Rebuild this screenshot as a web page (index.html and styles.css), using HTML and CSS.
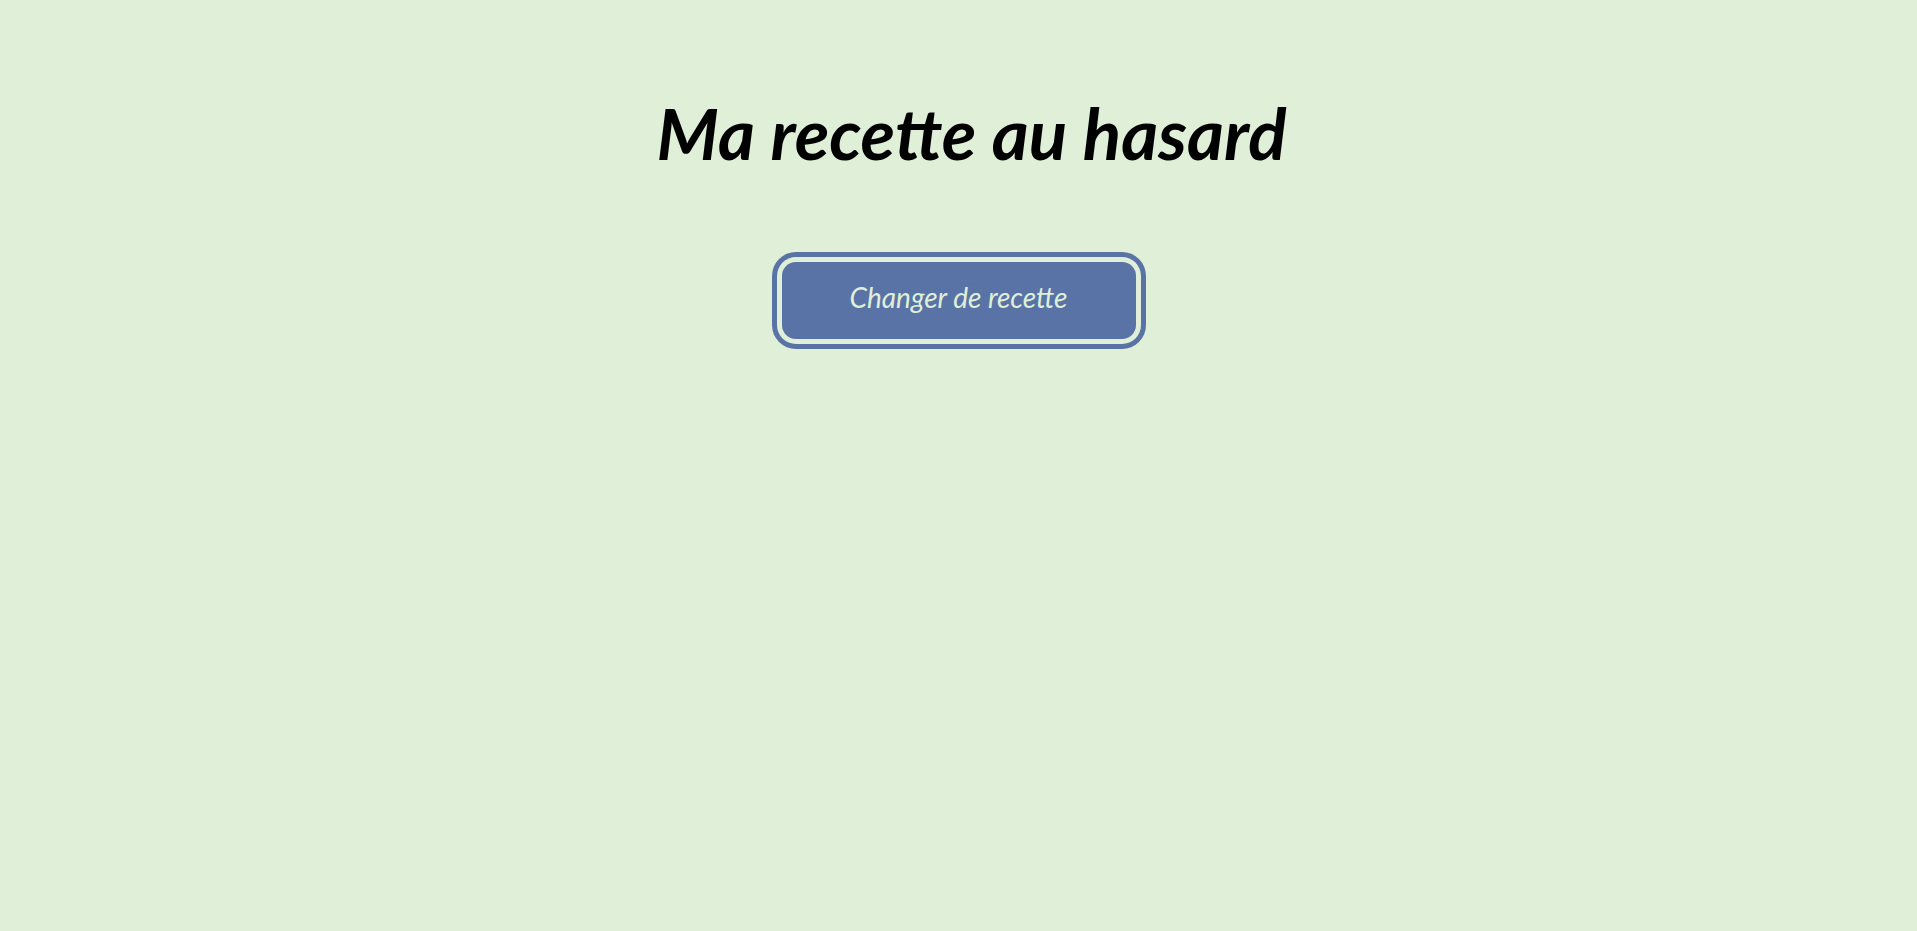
FILE: index.html
```
<!DOCTYPE html>
<html lang="fr">
<head>
    <meta charset="UTF-8">
    <meta name="viewport" content="width=device-width, initial-scale=1.0">
    <title>Ma recette au hasard</title>
    <link rel="stylesheet" href="styles.css">
</head>
<body>
    <header class="header">
        <h1 class="title">Ma recette au hasard</h1>
    </header>

    <main class="container">
        <button class="btn-recette" type="button">Changer de recette</button>
    </main>
</body>
</html>
```

FILE: styles.css
```
body {
    margin: 0;
    padding: 88px 20px;
    background-color: #dfefd8;
    font-family: "Lato", cursive;
    font-style: italic;
    text-align: center;
}

.title {
    margin: 0 0 84px;
    padding-left: 26px;
    color: #000;
    font-size: 71px;
    font-weight: bold;
    line-height: 90px;
}

/* double contour autour du bouton */
.btn-recette {
    padding: 18px 68px 24px;
    border: none;
    border-radius: 14px;
    background-color: #5a73a6;
    box-shadow: 0 0 0 5px #dfefd8, 0 0 0 10px #5a73a6;
    color: #dfefd8;
    font-family: inherit;
    font-size: 28px;
    font-style: inherit;
    line-height: 35px;
    cursor: pointer;
}

.btn-recette:hover {
    color: #fff;
}
```
